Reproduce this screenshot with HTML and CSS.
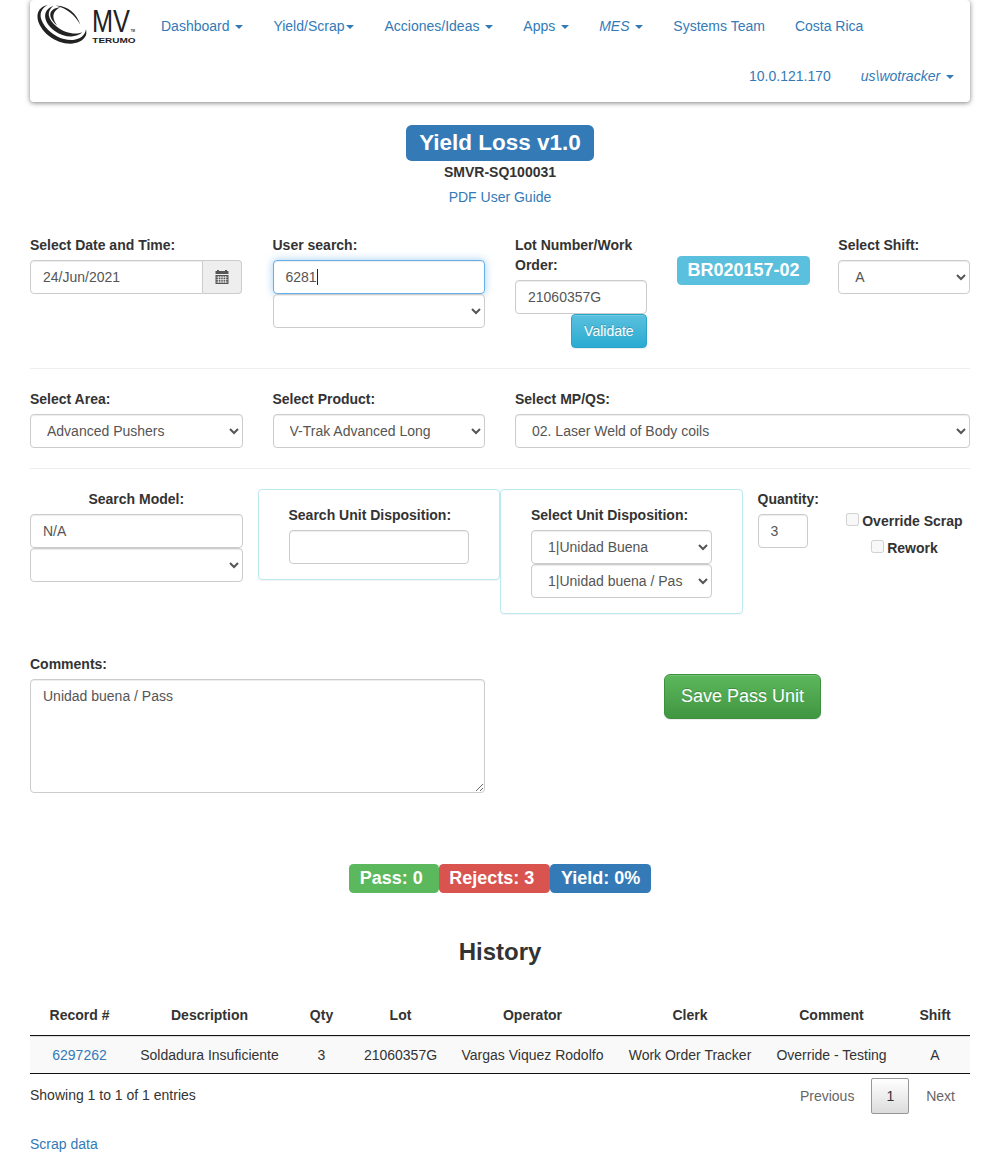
FILE: index.html
```html
<!DOCTYPE html>
<html lang="en">
<head>
<meta charset="utf-8">
<title>Yield Loss</title>
<link rel="stylesheet" href="styles.css">
</head>
<body>
<div class="container">
  <nav class="navbar">
    <div class="nav-row">
      <a class="brand" href="#">
        <svg width="112" height="50" viewBox="0 0 336 150" role="img" aria-label="MV Terumo">
          <g fill="#222">
            <path d="M68 15C22 25 32 76 72 108C108 137 166 141 183 106C185 99 184 92 183 88C180 107 165 118 144 120C112 122 80 104 61 80C40 53 42 28 68 15Z"/>
            <path d="M85 18C50 30 54 66 88 92C114 112 154 116 172 97C150 106 118 99 94 79C67 57 64 34 85 18Z"/>
            <path d="M107 21C70 26 66 50 96 76C80 54 80 34 107 21Z"/>
            <path d="M92 17C125 15 155 39 166 74C150 45 125 24 92 17Z"/>
          </g>
          <text class="logo-mv" x="201" y="97" textLength="114" lengthAdjust="spacingAndGlyphs">MV</text>
          <text class="logo-tm" x="317" y="96">TM</text>
          <text class="logo-terumo" x="202" y="129" textLength="130" lengthAdjust="spacingAndGlyphs">TERUMO</text>
        </svg>
      </a>
      <a href="#">Dashboard <b class="caret"></b></a>
      <a href="#">Yield/Scrap<b class="caret"></b></a>
      <a href="#">Acciones/Ideas <b class="caret"></b></a>
      <a href="#">Apps <b class="caret"></b></a>
      <a href="#"><i>MES</i> <b class="caret"></b></a>
      <a href="#">Systems Team</a>
      <a href="#">Costa Rica</a>
    </div>
    <div class="nav-row nav-right">
      <a href="#">10.0.121.170</a>
      <a href="#"><i>us\wotracker</i> <b class="caret"></b></a>
    </div>
  </nav>

  <header class="title">
    <h1 class="tag tag-primary tag-title">Yield Loss v1.0</h1>
    <strong>SMVR-SQ100031</strong>
    <a href="#">PDF User Guide</a>
  </header>

  <section class="row row-lot">
    <div class="col-3">
      <label>Select Date and Time:</label>
      <div class="input-group">
        <input class="control" type="text" value="24/Jun/2021">
        <span class="addon">
          <svg width="14" height="14" viewBox="0 0 14 14">
            <path fill="#555" d="M2 0h2v1h6V0h2v1h1.500v3H.5V1H2z"/>
            <path fill="#555" d="M.5 5h13v9H.5z"/>
            <path stroke="#eee" stroke-width=".8" d="M1.500 7.200h11M1.500 9.600h11M1.500 12h11M3.400 6v7M5.800 6v7M8.200 6v7M10.600 6v7"/>
          </svg>
        </span>
      </div>
    </div>
    <div class="col-3">
      <label>User search:</label>
      <div class="control focused">6281<span class="cursor"></span></div>
      <select class="control"><option></option></select>
    </div>
    <div class="col-2 lot">
      <label>Lot Number/Work Order:</label>
      <input class="control" type="text" value="21060357G">
      <button class="btn btn-info">Validate</button>
    </div>
    <div class="col-2 lot-tag"><span class="tag tag-info">BR020157-02</span></div>
    <div class="col-2">
      <label>Select Shift:</label>
      <select class="control"><option>A</option></select>
    </div>
  </section>
  <hr>
  <section class="row">
    <div class="col-3">
      <label>Select Area:</label>
      <select class="control"><option>Advanced Pushers</option></select>
    </div>
    <div class="col-3">
      <label>Select Product:</label>
      <select class="control"><option>V-Trak Advanced Long</option></select>
    </div>
    <div class="col-6">
      <label>Select MP/QS:</label>
      <select class="control"><option>02. Laser Weld of Body coils</option></select>
    </div>
  </section>
  <hr>
  <section class="row row-unit">
    <div class="col-3 model">
      <label>Search Model:</label>
      <input class="control" type="text" value="N/A">
      <select class="control"><option></option></select>
    </div>
    <div class="col-3 panel">
      <label>Search Unit Disposition:</label>
      <input class="control" type="text">
    </div>
    <div class="col-3 panel">
      <label>Select Unit Disposition:</label>
      <select class="control"><option>1|Unidad Buena</option></select>
      <select class="control"><option>1|Unidad buena / Pass</option></select>
    </div>
    <div class="col-1">
      <label>Quantity:</label>
      <input class="control" type="text" value="3">
    </div>
    <div class="col-2 checks">
      <label><input type="checkbox" disabled>Override Scrap</label>
      <label><input type="checkbox" disabled>Rework</label>
    </div>
  </section>
  <section class="row row-comments">
    <div class="col-6">
      <label>Comments:</label>
      <textarea class="control" rows="5">Unidad buena / Pass</textarea>
    </div>
    <div class="col-6 save"><button class="btn btn-success">Save Pass Unit</button></div>
  </section>

  <div class="totals">
    <span class="tag tag-success">Pass: 0&nbsp;</span>
    <span class="tag tag-danger">Rejects: 3&nbsp;</span>
    <span class="tag tag-primary">Yield: 0%</span>
  </div>

  <h2>History</h2>
  <table>
    <colgroup>
      <col class="c-record"><col class="c-desc"><col class="c-qty"><col class="c-lot">
      <col class="c-oper"><col class="c-clerk"><col class="c-comment"><col class="c-shift">
    </colgroup>
    <thead>
      <tr><th>Record #</th><th>Description</th><th>Qty</th><th>Lot</th><th>Operator</th><th>Clerk</th><th>Comment</th><th>Shift</th></tr>
    </thead>
    <tbody>
      <tr><td><a href="#">6297262</a></td><td>Soldadura Insuficiente</td><td>3</td><td>21060357G</td><td>Vargas Viquez Rodolfo</td><td>Work Order Tracker</td><td>Override - Testing</td><td>A</td></tr>
    </tbody>
  </table>
  <footer class="table-footer">
    <span class="info">Showing 1 to 1 of 1 entries</span>
    <div class="pages"><span>Previous</span><span class="current">1</span><span>Next</span></div>
  </footer>
  <a class="scrap" href="#">Scrap data</a>
</div>
</body>
</html>
```
FILE: styles.css
```css
* { box-sizing: border-box; }
html, body { height: 1154px; overflow: hidden; }
body {
  margin: 0;
  background: #fff;
  color: #333;
  font: 14px/20px "Liberation Sans", Arial, sans-serif;
}
a { color: #337ab7; text-decoration: none; }
.container { padding: 0 30px; }

.navbar {
  height: 102px;
  border: 1px solid transparent;
  border-radius: 4px;
  background: #fff;
  box-shadow: 0 1px 5px rgba(0, 0, 0, .5);
}
.nav-row { display: flex; height: 50px; }
.nav-row a { padding: 15px; white-space: nowrap; }
.nav-row .brand { width: 115px; height: 50px; padding: 0; flex: none; margin-top: -1px; margin-left: 0; }
.nav-row .brand svg { display: block; margin-left: -6px; }
.nav-right { justify-content: flex-end; }
.logo-mv { font: 92px "Liberation Sans", Arial, sans-serif; fill: #222; }
.logo-tm { font: bold 9px "Liberation Sans", Arial, sans-serif; fill: #333; }
.logo-terumo { font: bold 22px "Liberation Sans", Arial, sans-serif; fill: #222; }
.caret {
  display: inline-block;
  width: 0;
  height: 0;
  margin-left: 2px;
  vertical-align: middle;
  border-top: 4px solid;
  border-right: 4px solid transparent;
  border-left: 4px solid transparent;
}

.title { display: flex; flex-direction: column; align-items: center; padding-top: 23px; }
.title strong { margin-top: 1px; margin-bottom: 5px; }
.tag {
  display: block;
  padding: .2em .6em .3em;
  border-radius: .25em;
  color: #fff;
  font-size: 18px;
  font-weight: bold;
  line-height: 20px;
  white-space: nowrap;
}
.tag-title { margin: 0; font-size: 22.5px; line-height: 25px; }
.tag-primary { background: #337ab7; }
.tag-info { background: #5bc0de; }
.tag-success { background: #5cb85c; }
.tag-danger { background: #d9534f; }

.row {
  display: grid;
  grid-template-columns: repeat(12, 1fr);
  align-items: start;
  margin: 0 -15px;
}
.row > * { padding: 0 15px; min-width: 0; }
.row-lot { padding-top: 28px; }
.col-1 { grid-column: span 1; }
.col-2 { grid-column: span 2; }
.col-3 { grid-column: span 3; }
.col-6 { grid-column: span 6; }
label { display: block; margin-bottom: 5px; font-weight: bold; }
hr { height: 1px; margin: 20px 0; border: 0; background: #eee; }

.control {
  display: block;
  width: 100%;
  height: 34px;
  margin: 0;
  padding: 6px 12px;
  border: 1px solid #ccc;
  border-radius: 4px;
  background-color: #fff;
  box-shadow: inset 0 1px 1px rgba(0, 0, 0, .075);
  color: #555;
  font: 14px/20px "Liberation Sans", Arial, sans-serif;
}
textarea.control { height: 114px; resize: vertical; }
.focused {
  display: flex;
  border-color: #66afe9;
  box-shadow: inset 0 1px 1px rgba(0, 0, 0, .075), 0 0 8px rgba(102, 175, 233, .6);
}
.cursor { width: 1px; height: 16px; margin-top: 2px; background: #222; }
.input-group { display: flex; width: 212px; }
.input-group .control { border-radius: 4px 0 0 4px; }
.addon {
  display: flex;
  flex: none;
  align-items: center;
  justify-content: center;
  width: 39px;
  border: 1px solid #ccc;
  border-left: 0;
  border-radius: 0 4px 4px 0;
  background: #eee;
}
.lot { display: flex; flex-direction: column; }
.lot .btn { align-self: flex-end; }
.row > .lot-tag { display: flex; justify-content: center; padding: 21px 14px 0 16px; }

.btn {
  padding: 6px 12px;
  border: 1px solid;
  border-radius: 4px;
  box-shadow: inset 0 1px 0 rgba(255, 255, 255, .15), 0 1px 1px rgba(0, 0, 0, .075);
  color: #fff;
  font: 14px/20px "Liberation Sans", Arial, sans-serif;
  text-shadow: 0 -1px 0 rgba(0, 0, 0, .2);
}
.btn-info { border-color: #28a4c9; background: linear-gradient(#5bc0de, #2aabd2); }
.btn-success {
  height: 45px;
  padding: 8px 16px 10px;
  border-color: #3e8f3e;
  border-radius: 6px;
  background: linear-gradient(#5cb85c, #419641);
  font-size: 18px;
  line-height: 24px;
}

.row-unit { height: 165px; }
.model label { text-align: center; }
.row > .panel {
  padding: 15px 30px;
  border: 1px solid #bce8f1;
  border-radius: 4px;
  box-shadow: 0 1px 1px rgba(0, 0, 0, .05);
}
.row > .checks { padding-top: 22px; }
.checks label { display: flex; justify-content: center; margin-bottom: 7px; white-space: nowrap; }
.checks input { width: 13px; height: 13px; margin: 2px 3.500px 0 0; }
.save { display: flex; justify-content: center; }
.row > .save { padding-top: 20px; }

.totals { display: flex; justify-content: center; margin-top: 71px; }
h2 { margin: 46px 0 0; font-size: 24px; line-height: 26px; text-align: center; }

table {
  width: 100%;
  margin-top: 30px;
  border-collapse: separate;
  border-spacing: 0;
  border-bottom: 1px solid #111;
  table-layout: fixed;
  text-align: center;
  white-space: nowrap;
}
th { padding: 10px 0; border-bottom: 1px solid #111; }
td { padding: 8px 0; border-top: 1px solid #ddd; background: #f9f9f9; }
.c-record { width: 99px; }
.c-desc { width: 161px; }
.c-qty { width: 63px; }
.c-lot { width: 95px; }
.c-oper { width: 169px; }
.c-clerk { width: 146px; }
.c-comment { width: 137px; }
.c-shift { width: 70px; }

.table-footer { display: flex; justify-content: space-between; height: 60px; }
.info { padding-top: 11px; }
.pages { display: flex; gap: 2px; padding-top: 4px; color: #666; }
.pages span { height: 36px; padding: 7px 14px; border: 1px solid transparent; border-radius: 2px; }
.pages .current {
  padding: 7px 14px;
  border-color: #979797;
  background: linear-gradient(#fff, #dcdcdc);
  color: #333;
}
.scrap { display: block; }
```
